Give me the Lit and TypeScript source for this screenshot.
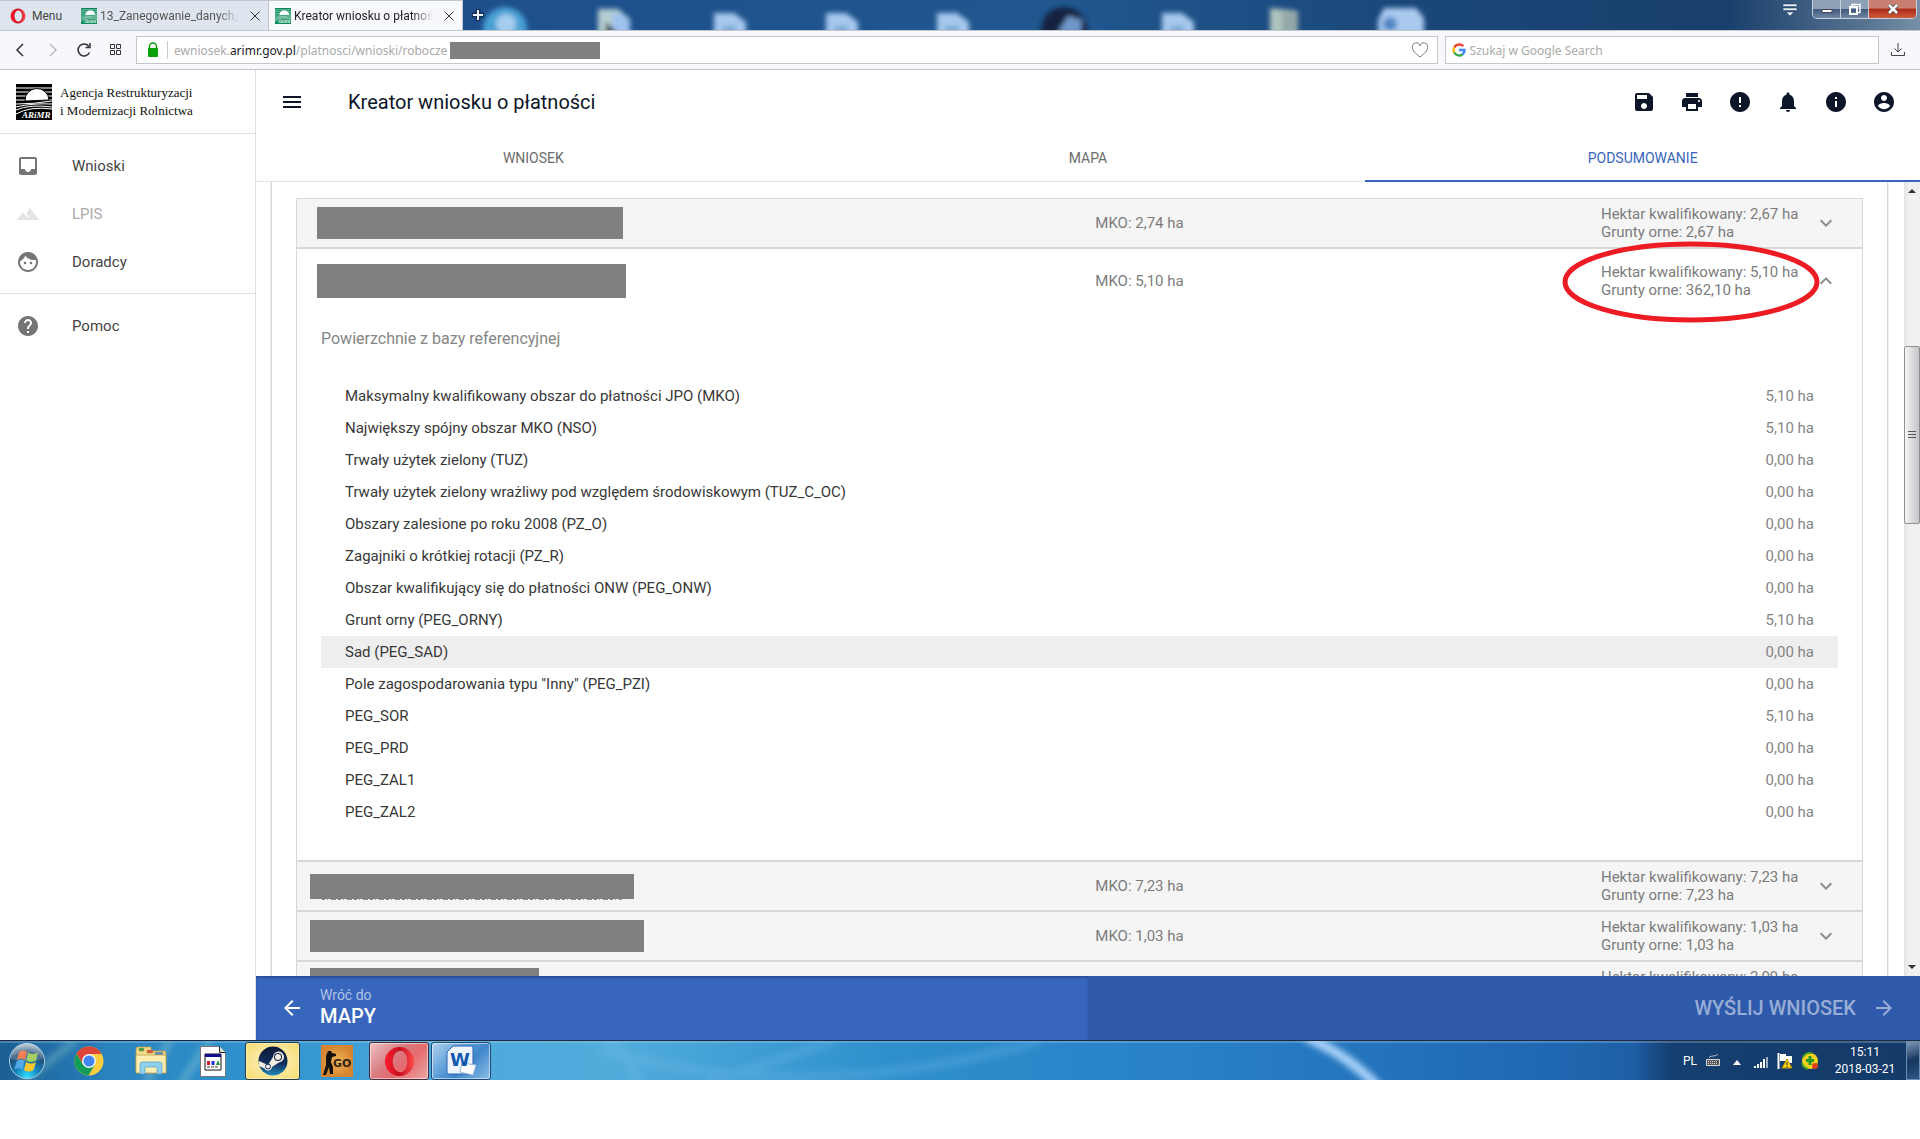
import { LitElement, html, svg, css, nothing } from "lit";
import { customElement, property, state } from "lit/decorators.js";
import { classMap } from "lit/directives/class-map.js";
import { styleMap } from "lit/directives/style-map.js";

const ICONS: Record<string, string> = {
  menu: "M3 18h18v-2H3v2zm0-5h18v-2H3v2zm0-7v2h18V6H3z",
  save: "M17 3H5c-1.11 0-2 .9-2 2v14c0 1.1.89 2 2 2h14c1.1 0 2-.9 2-2V7l-4-4zm-5 16c-1.66 0-3-1.34-3-3s1.34-3 3-3 3 1.34 3 3-1.34 3-3 3zm3-10H5V5h10v4z",
  print: "M19 8H5c-1.66 0-3 1.34-3 3v6h4v4h12v-4h4v-6c0-1.66-1.34-3-3-3zm-3 11H8v-5h8v5zm3-7c-.55 0-1-.45-1-1s.45-1 1-1 1 .45 1 1-.45 1-1 1zm-1-9H6v4h12V3z",
  error: "M12 2C6.48 2 2 6.48 2 12s4.48 10 10 10 10-4.48 10-10S17.52 2 12 2zm1 15h-2v-2h2v2zm0-4h-2V7h2v6z",
  bell: "M12 22c1.1 0 2-.9 2-2h-4c0 1.1.89 2 2 2zm6-6v-5c0-3.07-1.64-5.64-4.5-6.32V4c0-.83-.67-1.5-1.5-1.5s-1.5.67-1.5 1.5v.68C7.63 5.36 6 7.92 6 11v5l-2 2v1h16v-1l-2-2z",
  info: "M12 2C6.48 2 2 6.48 2 12s4.48 10 10 10 10-4.48 10-10S17.52 2 12 2zm1 15h-2v-6h2v6zm0-8h-2V7h2v2z",
  account: "M12 2C6.48 2 2 6.48 2 12s4.48 10 10 10 10-4.48 10-10S17.52 2 12 2zm0 3c1.66 0 3 1.34 3 3s-1.34 3-3 3-3-1.34-3-3 1.34-3 3-3zm0 14.2c-2.5 0-4.71-1.28-6-3.22.03-1.99 4-3.08 6-3.08 1.99 0 5.97 1.09 6 3.08-1.29 1.94-3.5 3.22-6 3.22z",
  inbox: "M19 3H4.99c-1.11 0-1.98.89-1.98 2L3 19c0 1.1.88 2 1.99 2H19c1.1 0 2-.9 2-2V5c0-1.11-.9-2-2-2zm0 12h-4c0 1.66-1.35 3-3 3s-3-1.34-3-3H4.99V5H19v10z",
  terrain: "M14 6l-3.75 5 2.85 3.8-1.6 1.2C9.81 13.75 7 10 7 10l-6 8h22L14 6z",
  face: "M9 11.75c-.69 0-1.25.56-1.25 1.25s.56 1.25 1.25 1.25 1.25-.56 1.25-1.25-.56-1.25-1.25-1.25zm6 0c-.69 0-1.25.56-1.25 1.25s.56 1.25 1.25 1.25 1.25-.56 1.25-1.25-.56-1.25-1.25-1.25zM12 2C6.48 2 2 6.48 2 12s4.48 10 10 10 10-4.48 10-10S17.52 2 12 2zm0 18c-4.41 0-8-3.59-8-8 0-.29.02-.58.05-.86 2.36-1.05 4.23-2.98 5.21-5.37C11.07 8.33 14.05 10 17.42 10c.78 0 1.53-.09 2.25-.26.21.71.33 1.47.33 2.26 0 4.41-3.59 8-8 8z",
  help: "M12 2C6.48 2 2 6.48 2 12s4.48 10 10 10 10-4.48 10-10S17.52 2 12 2zm1 17h-2v-2h2v2zm2.07-7.75l-.9.92C13.45 12.9 13 13.5 13 15h-2v-.5c0-1.1.45-2.1 1.17-2.83l1.24-1.26c.37-.36.59-.86.59-1.41 0-1.1-.9-2-2-2s-2 .9-2 2H8c0-2.21 1.79-4 4-4s4 1.79 4 4c0 .88-.36 1.68-.93 2.25z",
  more: "M16.59 8.59L12 13.17 7.41 8.59 6 10l6 6 6-6z",
  less: "M12 8l-6 6 1.41 1.41L12 10.83l4.59 4.58L18 14z",
  back: "M20 11H7.83l5.59-5.59L12 4l-8 8 8 8 1.41-1.41L7.83 13H20v-2z",
  forward: "M12 4l-1.41 1.41L16.17 11H4v2h12.17l-5.58 5.59L12 20l8-8z",
};

const icon = (name: string) =>
  html`<svg class="icon" viewBox="0 0 24 24" width="24" height="24" fill="currentColor" aria-hidden="true"><path d=${ICONS[name]}></path></svg>`;

/* Square emblem: sun over ploughed fields; black on the page, green in browser tabs. */
const emblem = (size: number, dark: string) => html`
  <svg class="icon" viewBox="0 0 36 36" width=${size} height=${size} aria-hidden="true">
    <rect width="36" height="36" fill=${dark}></rect>
    ${[4, 8, 12, 16].map((y) => svg`<path d="M0 ${y}H36" stroke="#fff" stroke-width="1"></path>`)}
    <path d="M9 17a12 12 0 0 1 24-1z" fill="#fff" stroke=${dark} stroke-width="1"></path>
    <path d="M0 19q18-1 36-3v20H0z" fill=${dark}></path>
    <path d="M0 20q18 0 36-3M0 23q16-4 36-3M0 26q14-6 36-3M0 30q14-8 36-5" fill="none" stroke="#fff" stroke-width="1"></path>
    <text x="6" y="34" font-family="Liberation Serif, serif" font-style="italic" font-weight="700" font-size="9" fill="#fff">ARiMR</text>
  </svg>`;

const operaRing = (size: number) => html`
  <svg class="icon" viewBox="0 0 32 32" width=${size} height=${size} aria-hidden="true">
    <defs>
      <linearGradient id="ring" x1="0" y1="0" x2="1" y2="0">
        <stop offset="0" stop-color="#ff1b2d"></stop><stop offset=".5" stop-color="#c4101f"></stop><stop offset="1" stop-color="#ff4a4a"></stop>
      </linearGradient>
    </defs>
    <path fill="url(#ring)" fill-rule="evenodd" d="M16 1a15 15 0 1 0 0 30 15 15 0 1 0 0-30zm1 4c4 0 7 5 7 11s-3 11-7 11-8-4-8-11 4-11 8-11z"></path>
  </svg>`;

interface Parcel {
  mko: string;
  hektar: string;
  grunty: string;
  mask: { width: number; height: number; outdent?: boolean; traces?: boolean };
  marked?: boolean;
}

const PARCELS: Parcel[] = [
  { mko: "2,74", hektar: "2,67", grunty: "2,67", mask: { width: 306, height: 32 } },
  { mko: "5,10", hektar: "5,10", grunty: "362,10", mask: { width: 309, height: 34 }, marked: true },
  { mko: "7,23", hektar: "7,23", grunty: "7,23", mask: { width: 324, height: 25, outdent: true, traces: true } },
  { mko: "1,03", hektar: "1,03", grunty: "1,03", mask: { width: 334, height: 32, outdent: true } },
  { mko: "2,09", hektar: "2,09", grunty: "2,09", mask: { width: 229, height: 36, outdent: true } },
];

const AREAS: [string, string][] = [
  ["Maksymalny kwalifikowany obszar do płatności JPO (MKO)", "5,10 ha"],
  ["Największy spójny obszar MKO (NSO)", "5,10 ha"],
  ["Trwały użytek zielony (TUZ)", "0,00 ha"],
  ["Trwały użytek zielony wrażliwy pod względem środowiskowym (TUZ_C_OC)", "0,00 ha"],
  ["Obszary zalesione po roku 2008 (PZ_O)", "0,00 ha"],
  ["Zagajniki o krótkiej rotacji (PZ_R)", "0,00 ha"],
  ["Obszar kwalifikujący się do płatności ONW (PEG_ONW)", "0,00 ha"],
  ["Grunt orny (PEG_ORNY)", "5,10 ha"],
  ["Sad (PEG_SAD)", "0,00 ha"],
  ['Pole zagospodarowania typu "Inny" (PEG_PZI)', "0,00 ha"],
  ["PEG_SOR", "5,10 ha"],
  ["PEG_PRD", "0,00 ha"],
  ["PEG_ZAL1", "0,00 ha"],
  ["PEG_ZAL2", "0,00 ha"],
];

const reset = css`
  * { box-sizing: border-box; }
  button {
    margin: 0; padding: 0; border: 0; background: none; color: inherit;
    font: inherit; text-align: inherit; cursor: pointer;
  }
  a { color: inherit; text-decoration: none; }
  .icon { display: block; flex: none; }
`;

@customElement("browser-chrome")
class BrowserChrome extends LitElement {
  static styles = [
    reset,
    css`
      :host { display: block; font-family: "Noto Sans", "Open Sans", sans-serif; font-size: 12px; color: #222; }
      .strip {
        position: relative; display: flex; height: 31px; overflow: hidden;
        border-bottom: 1px solid #c3c6ca;
        background: linear-gradient(90deg, #1d4f8c 24%, #20578f 55%, #1a4678 75%, #193f6c 90%, #56728f 97%, #7790a8);
      }
      .desktop { position: absolute; left: 462px; top: 0; }
      .menu, .tab { display: flex; align-items: center; height: 31px; border-top: 1px solid #c3c6ca; background: #dfe5ee; font-family: Roboto, sans-serif; }
      .menu { width: 75px; gap: 6px; padding-left: 10px; color: #444; }
      .tab { width: 194px; gap: 3px; padding-left: 6px; color: #555; border-right: 1px solid #c3c6ca; }
      .tab.active { background: #f7f8fb; color: #222; }
      .title {
        width: 142px; overflow: hidden; white-space: nowrap; line-height: 20px;
        mask-image: linear-gradient(90deg, #000 85%, transparent);
      }
      .close { padding: 0 8px; }
      .add { position: relative; padding: 0 8px; }
      .controls { position: relative; display: flex; align-items: flex-start; gap: 14px; margin-left: auto; padding-right: 3px; }
      .buttons { display: flex; border: 1px solid #c8d0da; border-top: 0; border-radius: 0 0 5px 5px; overflow: hidden; }
      .win { height: 18px; display: flex; align-items: center; justify-content: center; width: 28px; background: linear-gradient(#8da0b6 50%, #40587a 50%, #6e87a5); border-right: 1px solid #c8d0da; }
      .win.close-win { width: 47px; border: 0; background: linear-gradient(#c98073 45%, #a92a17 50%, #cf5a3c); }
      .bar { display: flex; align-items: center; height: 39px; background: #f7f8fb; border-bottom: 1px solid #c3c6ca; padding-right: 14px; }
      .nav { display: flex; width: 136px; padding-left: 4px; }
      .nav button { width: 32px; display: flex; justify-content: center; color: #333; }
      .nav .off { color: #bbb; }
      .field { display: flex; align-items: center; height: 28px; background: #fff; border: 1px solid #c3c6ca; font-size: 12px; }
      .address { flex: 301; color: #aaa; padding: 0 8px; }
      .sep { width: 1px; height: 18px; background: #ccc; margin: 0 6px; }
      .url { flex: 1; display: flex; align-items: center; gap: 3px; white-space: nowrap; outline: 0; }
      .url b { font-weight: 400; color: #222; }
      .mask { width: 150px; height: 17px; background: #808080; }
      .search { flex: 100; margin: 0 11px 0 7px; padding-left: 6px; gap: 4px; }
      .search input { flex: 1; min-width: 0; border: 0; outline: 0; padding: 0; font: inherit; background: none; }
      .search input::placeholder { color: #aaa; opacity: 1; }
    `,
  ];

  private cross = html`<svg class="icon" width="10" height="10" viewBox="0 0 10 10" stroke="#333" aria-hidden="true"><path d="M.5.5l9 9M9.500.5l-9 9"></path></svg>`;

  render() {
    return html`
      <header class="strip">
        <svg class="desktop" width="1000" height="30" aria-hidden="true">
          <defs><filter id="soft"><feGaussianBlur stdDeviation="2.500"></feGaussianBlur></filter></defs>
          <g filter="url(#soft)">
            <circle cx="43" cy="29" r="22" fill="#4aa0d4"></circle><circle cx="44" cy="24" r="10" fill="#a6cdf0"></circle>
            <path d="M136 9h20l12 10v20h-32z" fill="#b6cdd0"></path><path d="M150 14h12l6 8v16h-18z" fill="#9ec3ee"></path><path d="M144 22l12 12h-12z" fill="#222"></path>
            ${[252, 364, 475, 700].map(
              (x) => svg`<path d="M${x} 13h20l12 9v16h-32z" fill="#a5c7ed"></path><path d="M${x + 8} 27h14v5h-14z" fill="#6d9cce"></path>`
            )}
            <circle cx="602" cy="30" r="23" fill="#14233f"></circle><path d="M596 32l10-16 14 4-2 14z" fill="#6e97c9"></path>
            <path d="M808 8l28 3v24h-28z" fill="#b0c4bd"></path><path d="M820 12h16v22h-16z" fill="#93a8a6"></path>
            <path d="M922 8h32l8 10v20h-46V20z" fill="#a9c9ef"></path><circle cx="928" cy="24" r="7" fill="#4f86c2"></circle>
          </g>
        </svg>
        <button class="menu">${operaRing(16)}<span>Menu</span></button>
        <div class="tab">${emblem(16, "#0a8a5a")}<span class="title">13_Zanegowanie_danych_r</span><button class="close" aria-label="Zamknij kartę">${this.cross}</button></div>
        <div class="tab active">${emblem(16, "#0a8a5a")}<span class="title">Kreator wniosku o płatności</span><button class="close" aria-label="Zamknij kartę">${this.cross}</button></div>
        <button class="add" aria-label="Nowa karta">
          <svg class="icon" width="14" height="14" viewBox="0 0 14 14" aria-hidden="true"><path d="M7 1v12M1 7h12" stroke="#12305a" stroke-width="5"></path><path d="M7 2v10M2 7h10" stroke="#eef3f8" stroke-width="2"></path></svg>
        </button>
        <div class="controls">
          <svg class="icon" width="16" height="18" viewBox="0 0 16 18" fill="#e8eef4" stroke="#17325a" stroke-width=".5" aria-hidden="true"><path d="M1 4h14v2.500H1zM1 8h14v2.500H1zM4 12h8l-4 4z"></path></svg>
          <div class="buttons">
            <button class="win" aria-label="Minimalizuj"><svg class="icon" width="12" height="10" aria-hidden="true"><path d="M1 5.500h10v3H1z" fill="#fff" stroke="#445"></path></svg></button>
            <button class="win" aria-label="Przywróć"><svg class="icon" width="13" height="13" fill="none" aria-hidden="true"><path d="M4 3V1.500h8v8h-2" stroke="#fff" stroke-width="1.500"></path><path d="M2 4h7v7H2z" stroke="#fff" stroke-width="2"></path></svg></button>
            <button class="win close-win" aria-label="Zamknij"><svg class="icon" width="12" height="10" aria-hidden="true"><path d="M2 1l8 8M10 1L2 9" stroke="#444" stroke-width="4"></path><path d="M2 1l8 8M10 1L2 9" stroke="#fff" stroke-width="2.500"></path></svg></button>
          </div>
        </div>
      </header>
      <div class="bar">
        <nav class="nav">
          <button aria-label="Wstecz"><svg class="icon" width="20" height="20" fill="none" stroke="currentColor" stroke-width="1.500"><path d="M13 4l-6 6 6 6"></path></svg></button>
          <button class="off" aria-label="Dalej"><svg class="icon" width="20" height="20" fill="none" stroke="currentColor" stroke-width="1.500"><path d="M8 4l6 6-6 6"></path></svg></button>
          <button aria-label="Odśwież"><svg class="icon" width="20" height="20" fill="none" stroke="currentColor" stroke-width="1.500"><path d="M15.500 12.500A6 6 0 1 1 15 6.500"></path><path d="M16 3v4.500h-4.500"></path></svg></button>
          <button aria-label="Szybki wybór"><svg class="icon" width="20" height="20" fill="none" stroke="currentColor"><path d="M4.500 4.500h4v4h-4zM10.500 4.500h4v4h-4zM4.500 10.500h4v4h-4zM10.500 10.500h4v4h-4z"></path></svg></button>
        </nav>
        <div class="field address">
          <svg class="icon" width="16" height="16" aria-hidden="true"><path d="M4.500 7V4.500a3.500 3.500 0 0 1 7 0V7" fill="none" stroke="#0a9a0a" stroke-width="1.500"></path><rect x="3" y="6" width="10" height="9" rx="1" fill="#0aa00a"></rect></svg>
          <span class="sep"></span>
          <div class="url" role="textbox" aria-label="Adres strony"><span>ewniosek.<b>arimr.gov.pl</b>/platnosci/wnioski/robocze</span><span class="mask"></span></div>
          <svg class="icon" width="18" height="16" fill="none" stroke="#777" aria-hidden="true"><path d="M9 15C4 11 1.500 9 1.500 5.500a3.800 3.800 0 0 1 7.500-1.500 3.800 3.800 0 0 1 7.500 1.500C16.500 9 14 11 9 15z"></path></svg>
        </div>
        <label class="field search">
          <svg class="icon" width="14" height="14" viewBox="0 0 14 14" fill="none" stroke-width="2.500" aria-hidden="true">
            <path d="M11.300 3.300A5.500 5.500 0 0 0 2.300 4.300" stroke="#ea4335"></path><path d="M2.300 4.300a5.500 5.500 0 0 0 0 5.400" stroke="#fbbc05"></path>
            <path d="M2.300 9.700a5.500 5.500 0 0 0 8.300 1.500" stroke="#34a853"></path><path d="M10.600 11.200A5.500 5.500 0 0 0 12.500 7H7" stroke="#4285f4"></path>
          </svg>
          <input type="search" aria-label="Szukaj" placeholder="Szukaj w Google Search" />
        </label>
        <button aria-label="Pobrane"><svg class="icon" width="16" height="16" fill="none" stroke="#444"><path d="M8 1v9M4.500 6.500L8 10l3.500-3.500M1.500 10v3.500h13V10"></path></svg></button>
      </div>
    `;
  }
}

@customElement("side-nav")
class SideNav extends LitElement {
  static styles = [
    reset,
    css`
      :host { display: block; width: 256px; flex: none; border-right: 1px solid #e0e0e0; background: #fff; }
      .brand { display: flex; align-items: center; gap: 8px; height: 64px; padding: 0 16px; border-bottom: 1px solid #e0e0e0; font: 13px/18px "Liberation Serif", serif; color: #111; }
      .group { display: block; padding: 8px 0 7px; border-bottom: 1px solid #e0e0e0; }
      .group:last-child { border: 0; }
      .item { display: flex; align-items: center; gap: 32px; height: 48px; padding: 0 16px; color: #444; }
      .item .icon { color: #757575; }
      .item.off { color: #aaa; }
      .item.off .icon { color: #e4e4e4; }
    `,
  ];

  private item(name: string, label: string, off = false) {
    return html`<a class=${classMap({ item: true, off })} href="#" aria-disabled=${off}>${icon(name)}<span>${label}</span></a>`;
  }

  render() {
    return html`
      <div class="brand">${emblem(36, "#000")}<span>Agencja Restrukturyzacji<br />i Modernizacji Rolnictwa</span></div>
      <nav class="group">${this.item("inbox", "Wnioski")}${this.item("terrain", "LPIS", true)}${this.item("face", "Doradcy")}</nav>
      <nav class="group">${this.item("help", "Pomoc")}</nav>
    `;
  }
}

@customElement("parcel-panel")
class ParcelPanel extends LitElement {
  @property({ attribute: false }) parcel!: Parcel;
  @property({ type: Boolean }) open = false;

  static styles = [
    reset,
    css`
      :host { display: block; border: 1px solid #d8d8d8; background: #fff; }
      .head {
        display: grid; grid-template-columns: 49fr 32fr 15fr; align-items: center;
        width: 100%; height: 48px; padding: 0 24px; background: #f5f5f5; color: #7c7c7c; line-height: 18px;
      }
      .head.open { height: 64px; background: #fff; }
      .mask { display: block; background: #808080; margin-left: -4px; }
      .mask.outdent { margin-left: -11px; }
      .mask.traces { position: relative; }
      .mask.traces::after {
        content: ""; position: absolute; left: 12px; right: 12px; top: 100%; height: 1px;
        background: repeating-linear-gradient(90deg, #888 0 3px, transparent 3px 5px, #999 5px 6px, transparent 6px 9px, #888 9px 14px, transparent 14px 16px);
      }
      .values { position: relative; display: flex; align-items: center; justify-content: space-between; white-space: nowrap; }
      .values .icon { color: #8c8c8c; }
      .ellipse { position: absolute; z-index: 2; left: -39px; top: -22px; width: 258px; height: 82px; pointer-events: none; }
      .body { padding: 14px 24px 32px; }
      h3 { margin: 0 0 29px; font-weight: 400; font-size: 16px; line-height: 24px; color: #858585; }
      table { width: 100%; border-collapse: collapse; }
      th, td { height: 32px; padding: 0 24px; font-weight: 400; text-align: left; color: #383838; }
      td { text-align: right; color: #858585; }
      .hover { background: #eee; }
    `,
  ];

  render() {
    const { mko, hektar, grunty, mask, marked } = this.parcel;
    return html`
      <button class=${classMap({ head: true, open: this.open })} aria-expanded=${this.open} @click=${() => this.dispatchEvent(new CustomEvent("toggle-panel"))}>
        <span class=${classMap({ mask: true, outdent: !!mask.outdent, traces: !!mask.traces })} style=${styleMap({ width: `${mask.width}px`, height: `${mask.height}px` })}></span>
        <span>MKO: ${mko} ha</span>
        <span class="values">
          <span>Hektar kwalifikowany: ${hektar} ha<br />Grunty orne: ${grunty} ha</span>
          ${icon(this.open ? "less" : "more")}
          ${marked ? html`<svg class="ellipse" viewBox="0 0 258 82" aria-hidden="true"><ellipse cx="129" cy="41" rx="126" ry="38" fill="none" stroke="#ed1c24" stroke-width="5"></ellipse></svg>` : nothing}
        </span>
      </button>
      ${this.open
        ? html`<div class="body">
            <h3>Powierzchnie z bazy referencyjnej</h3>
            <table>
              ${AREAS.map(([label, value], i) => html`<tr class=${classMap({ hover: i === 8 })}><th scope="row">${label}</th><td>${value}</td></tr>`)}
            </table>
          </div>`
        : nothing}
    `;
  }
}

@customElement("task-bar")
class TaskBar extends LitElement {
  static styles = [
    reset,
    css`
      :host { display: block; font-family: Roboto, sans-serif; font-size: 12px; color: #fff; }
      .bar { position: relative; display: flex; height: 40px; overflow: hidden; border-top: 1px solid #1b2a40; background: linear-gradient(90deg, #1b5f94, #2a84c0 6%, #2f93cf 14%, #4ba9da 22%, #50acdb 32%, #2f90cd 46%, #2880c6 62%, #1f66af 82%, #1d5fa8 85%, #153f70 87%, #143a68); }
      .light { position: absolute; left: 0; top: 0; width: 100%; height: 100%; }
      .bar > :not(.light) { position: relative; }
      .start { width: 58px; display: flex; align-items: center; padding-left: 8px; }
      .app { width: 60px; margin: 1px 1px 0; display: flex; align-items: center; justify-content: center; border: 1px solid transparent; border-radius: 3px; }
      .app.steam { border-color: #2c3a44; background: radial-gradient(#fff2c8, #f5dc6e); box-shadow: inset 0 0 0 1px #fff6; width: 55px; margin-right: 6px; }
      .app.opera { border-color: #4a2a3c; background: linear-gradient(135deg, #eec3c6, #d87b80 40%, #e46b6e 60%, #eda5a5); box-shadow: inset 0 0 0 1px #fff8; }
      .app.word { border-color: #1c4a78; background: linear-gradient(135deg, #b3d2ee, #5d9fd8 40%, #3f86cb 60%, #8cbfe6); box-shadow: inset 0 0 0 1px #fff8; }
      .tray { display: flex; align-items: center; gap: 8px; margin-left: auto; padding-right: 3px; }
      .clock { width: 76px; text-align: center; line-height: 17px; }
      .show { width: 14px; border: 1px solid #6d8db0; background: linear-gradient(160deg, #7f97b5, #16365f 50%, #2b5788); }
    `,
  ];

  render() {
    return html`
      <footer class="bar">
        <svg class="light" viewBox="0 0 1920 39" preserveAspectRatio="none" aria-hidden="true">
          <defs><filter id="glow"><feGaussianBlur stdDeviation="3"></feGaussianBlur></filter></defs>
          <path d="M0 1H1920" stroke="#b5d2ea" stroke-opacity=".6" stroke-width="1"></path>
          <g filter="url(#glow)" fill="none">
            <path d="M1306-4q42 18 72 50" stroke="#a9d2fa" stroke-width="10"></path>
            <path d="M610-4q18 18 30 50M835 0q-70 22-130 44M600 8q200 60 440-8" stroke="#8cc6ee" stroke-opacity=".2" stroke-width="10"></path>
            <path d="M75 0L20 44M210 0l-30 44M170 0l-25 44" stroke="#a8dcd0" stroke-opacity=".3" stroke-width="8"></path>
          </g>
        </svg>
        <button class="start" aria-label="Start">
          <svg class="icon" width="38" height="38" viewBox="0 0 38 38">
            <defs><radialGradient id="orb" cx=".5" cy=".95" r=".9"><stop offset="0" stop-color="#2fe0ff"></stop><stop offset=".4" stop-color="#1580b8"></stop><stop offset=".75" stop-color="#1b4a70"></stop><stop offset="1" stop-color="#9fb4c4"></stop></radialGradient></defs>
            <circle cx="19" cy="19" r="17.500" fill="url(#orb)" stroke="#a9cfe4"></circle>
            <path d="M11 10q5-3 8 0l-2 8q-4-3-8 0z" fill="#f0602a"></path><path d="M20 10.500q5 3 10 0l-2 8q-5 3-9.500 0z" fill="#8cc63e"></path>
            <path d="M8.500 19.500q4-3 8 0l-2 8q-4-3-8 0z" fill="#54a8ea"></path><path d="M18 20q5 3 10 0l-2.500 8q-5 3-9.500 0z" fill="#fcc82c"></path>
            <path d="M3 17a16 16 0 0 1 32 0q-16 5-32 0z" fill="#fff" opacity=".2"></path>
          </svg>
        </button>
        <button class="app" aria-label="Chrome">
          <svg class="icon" width="30" height="30" viewBox="0 0 30 30"><circle cx="15" cy="15" r="14.500" fill="#ffcd40"></circle><path d="M15 8h12.700A14.500 14.500 0 0 0 2.500 7.700L9 18z" fill="#db4437"></path><path d="M2.500 7.700A14.500 14.500 0 0 0 14.500 29.500L21 18.500l-6 3-6-3z" fill="#0f9d58"></path><circle cx="15" cy="15" r="7" fill="#f4f4f4"></circle><circle cx="15" cy="15" r="5.500" fill="#4285f4"></circle></svg>
        </button>
        <button class="app" aria-label="Eksplorator">
          <svg class="icon" width="32" height="32" viewBox="0 0 32 32" stroke="#b89a48" stroke-width=".7"><path d="M1 5l1-3h14v4h14l1 3v19H1z" fill="#f3dd8c"></path><path d="M4 3h5v3H4z" fill="#2ca34a"></path><path d="M12 5h6v3h-6z" fill="#d34a3a"></path><path d="M20 7h8v3h-8z" fill="#4b8fd0"></path><path d="M1 10h30v18H1z" fill="#fbeeb0"></path><path d="M5 29V19q0-2 2-2h18q2 0 2 2v10h-5v-7H10v7z" fill="#8fd0ee" stroke="#5b9fc4"></path></svg>
        </button>
        <button class="app" aria-label="Dokument">
          <svg class="icon" width="28" height="33" viewBox="0 0 28 33"><path d="M1.500 1.500h19l6 6v24h-25z" fill="#fff" stroke="#777"></path><path d="M20.500 1.500v6h6" fill="#ddd" stroke="#222"></path><path d="M6 9h16v16H6z" fill="#fff" stroke="#111"></path><path d="M6 9h16v3H6z" fill="#10108c"></path><path d="M8 16h3v4H8z" fill="#d2202a"></path><path d="M12.500 16h3v4h-3z" fill="#2b2bd0"></path><path d="M17 20l2-5 2 5z" fill="#15953a"></path><path d="M8 22h12" stroke="#333" stroke-dasharray="3 1"></path></svg>
        </button>
        <button class="app steam" aria-label="Steam">
          <svg class="icon" width="30" height="30" viewBox="0 0 30 30"><defs><linearGradient id="st" x1="0" y1="0" x2="0" y2="1"><stop offset="0" stop-color="#0d1736"></stop><stop offset=".6" stop-color="#12305e"></stop><stop offset="1" stop-color="#1f8cc0"></stop></linearGradient></defs><circle cx="15" cy="15" r="14.500" fill="url(#st)"></circle><path d="M1 15l9 4 5-8a5.500 5.500 0 1 1 6 5.500l-7 4.500a4 4 0 0 1-7.500 1.500L1 20z" fill="#f2ede0"></path><circle cx="20" cy="11" r="4" fill="#12244a"></circle><circle cx="20" cy="11" r="3" fill="#f2ede0"></circle><circle cx="10" cy="20.500" r="2.500" fill="none" stroke="#12305e"></circle></svg>
        </button>
        <button class="app" aria-label="CS:GO">
          <svg class="icon" width="32" height="32" viewBox="0 0 32 32"><defs><radialGradient id="go"><stop offset="0" stop-color="#f0b458"></stop><stop offset="1" stop-color="#d68430"></stop></radialGradient></defs><rect width="32" height="32" fill="url(#go)"></rect><path d="M7 6l3 0 1 2 4 1v2l-4 1-1 5 2 5v7H9l-1-7-3 8H2l3-10V11z" fill="#15130d"></path><text x="12" y="22" font-family="DejaVu Sans, sans-serif" font-weight="700" font-size="11" fill="#2c220f">GO</text></svg>
        </button>
        <button class="app opera" aria-label="Opera">${operaRing(31)}</button>
        <button class="app word" aria-label="Word">
          <svg class="icon" width="32" height="32" viewBox="0 0 32 32"><path d="M8 1h20v28H2V7z" fill="#eef4fc" stroke="#2a5fae"></path><path d="M17 18l14 2-3 10-13-3z" fill="#fff" stroke="#9ab8dc"></path><text x="5" y="21" font-family="DejaVu Sans, sans-serif" font-weight="700" font-size="18" fill="#1458ae">W</text></svg>
        </button>
        <div class="tray">
          <span>PL</span>
          <svg class="icon" width="16" height="16"><path d="M1.500 6.500h13v6h-13z" fill="#555" stroke="#d8d8d8"></path><path d="M3 8.500h10M3 10.500h10" stroke="#ddd" stroke-dasharray="1 1"></path><path d="M4 5q0-2 4-2t5-2" fill="none" stroke="#bbb"></path></svg>
          <svg class="icon" width="16" height="16"><path d="M4 12h8L8 7z" fill="#fff"></path></svg>
          <svg class="icon" width="16" height="16" fill="#fff"><path d="M1 13h2v2H1zM4 11h2v4H4zM7 9h2v6H7zM10 6h2v9h-2z"></path><path d="M13 4h2v11h-2z" fill="#9aaec6"></path></svg>
          <svg class="icon" width="16" height="18"><path d="M1.500 1v16" stroke="#fff" stroke-width="2"></path><path d="M3 2h6v2h6v7H9V9H3z" fill="#fff"></path><path d="M5 16l5-9 5 9z" fill="#ffd51e" stroke="#b98d00"></path><path d="M10 10v3M10 14v1.500" stroke="#222"></path></svg>
          <svg class="icon" width="18" height="18"><circle cx="9" cy="9" r="8" fill="#f4d11c"></circle><path d="M2 5a8 8 0 0 1 9-4M1 11a8 8 0 0 0 6 6" stroke="#3b9d2a" stroke-width="2" fill="none"></path><path d="M9 4v9M5 8.500h8" stroke="#27952a" stroke-width="3"></path><circle cx="14" cy="14" r="3" fill="#e0401c"></circle></svg>
          <button class="clock">15:11<br />2018-03-21</button>
        </div>
        <button class="show" aria-label="Pokaż pulpit"></button>
      </footer>
    `;
  }
}

@customElement("app-root")
class AppRoot extends LitElement {
  @state() private opened = 1;

  static styles = [
    reset,
    css`
      :host {
        display: flex; flex-direction: column; box-sizing: border-box; height: 100vh; padding-bottom: 59px;
        background: #fff; font-family: Roboto, sans-serif; font-size: 15px; color: #333; overflow: hidden;
      }
      .app { flex: 1; display: flex; min-height: 0; }
      .main { flex: 1; display: flex; flex-direction: column; min-width: 0; }
      .top { display: flex; align-items: center; height: 64px; padding: 0 24px; color: #0c1628; }
      .top h1 { margin: 0 0 0 44px; font-weight: 400; font-size: 20px; line-height: 24px; }
      .actions { display: flex; gap: 24px; margin-left: auto; }
      .tabs { display: grid; grid-template-columns: repeat(3, 1fr); height: 48px; border-bottom: 1px solid #e4e4e4; color: #6c6c6c; font-size: 14px; }
      .tab { text-align: center; height: 48px; padding-top: 2px; border-bottom: 2px solid transparent; }
      .tab.active { color: #3966bd; border-color: #3966bd; }
      .view { flex: 1; display: flex; min-height: 0; }
      .scroll { flex: 1; min-width: 0; overflow: hidden; padding: 0 16px 0 15px; }
      .card { border: 1px solid #d8d8d8; border-width: 0 1px; box-shadow: 0 0 2px #ccc; padding: 16px 24px; min-height: 100%; }
      .rail { display: flex; flex-direction: column; width: 16px; background: linear-gradient(90deg, #e3e3e3, #f0f0f0 30%); }
      .step { height: 17px; display: grid; place-items: center; }
      .before { flex: 147; }
      .after { flex: 436; }
      .thumb { flex: 177; display: grid; place-items: center; border: 1px solid #8f8f8f; border-radius: 2px; background: linear-gradient(90deg, #f5f5f5, #dcdcdf 50%, #c4c4c8); }
      .foot { display: grid; grid-template-columns: 1fr 1fr; height: 64px; color: #fff; background: #3966bd; }
      .foot button { display: flex; align-items: center; height: 64px; padding: 0 24px; }
      .foot .prev { gap: 16px; box-shadow: inset 0 2px 2px #2a4f98; }
      .prev span { padding-bottom: 2px; }
      .prev small { display: block; font-size: 14px; line-height: 18px; color: #b0c2e5; }
      .prev strong, .next strong { font-size: 20px; line-height: 24px; font-weight: 500; }
      .prev strong { display: block; }
      .foot .next { justify-content: flex-end; gap: 16px; background: #2f5aab; color: #97add5; }
    `,
  ];

  private arrow(down: boolean) {
    return html`<svg class="icon" width="8" height="5" aria-hidden="true"><path d=${down ? "M0 0h8L4 4z" : "M0 5h8L4 1z"} fill="#333"></path></svg>`;
  }

  render() {
    const actions: [string, string][] = [
      ["save", "Zapisz"], ["print", "Drukuj"], ["error", "Błędy"], ["bell", "Powiadomienia"], ["info", "Informacje"], ["account", "Konto"],
    ];
    return html`
      <browser-chrome></browser-chrome>
      <div class="app">
        <side-nav></side-nav>
        <main class="main">
          <div class="top">
            <button aria-label="Menu boczne">${icon("menu")}</button>
            <h1>Kreator wniosku o płatności</h1>
            <div class="actions">${actions.map(([name, label]) => html`<button aria-label=${label}>${icon(name)}</button>`)}</div>
          </div>
          <div class="tabs" role="tablist">
            ${["WNIOSEK", "MAPA", "PODSUMOWANIE"].map(
              (label, i) => html`<button role="tab" aria-selected=${i === 2} class=${classMap({ tab: true, active: i === 2 })}>${label}</button>`
            )}
          </div>
          <div class="view">
            <div class="scroll">
              <div class="card">
                ${PARCELS.map(
                  (parcel, i) => html`<parcel-panel .parcel=${parcel} ?open=${this.opened === i} @toggle-panel=${() => (this.opened = this.opened === i ? -1 : i)}></parcel-panel>`
                )}
              </div>
            </div>
            <div class="rail" aria-hidden="true">
              <span class="step">${this.arrow(false)}</span>
              <span class="before"></span>
              <span class="thumb"><svg class="icon" width="8" height="9"><path d="M0 1.500h8M0 4.500h8M0 7.500h8" stroke="#555"></path></svg></span>
              <span class="after"></span>
              <span class="step">${this.arrow(true)}</span>
            </div>
          </div>
          <div class="foot">
            <button class="prev">${icon("back")}<span><small>Wróć do</small><strong>MAPY</strong></span></button>
            <button class="next"><strong>WYŚLIJ WNIOSEK</strong>${icon("forward")}</button>
          </div>
        </main>
      </div>
      <task-bar></task-bar>
    `;
  }
}
